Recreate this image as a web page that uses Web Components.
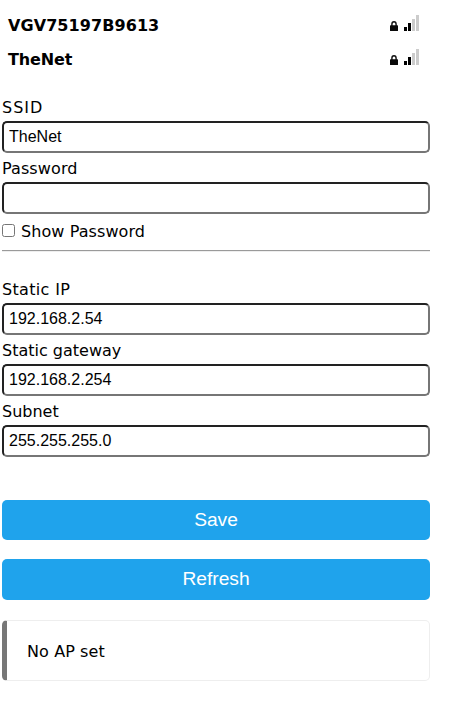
<!DOCTYPE html>
<html lang="en">
<head>
<meta charset="utf-8">
<title>WiFi configuration</title>
<style>
body { margin: 0; background: #fff; color: #000; font: 16px/20px Verdana, "DejaVu Sans", sans-serif; }
</style>
</head>
<body>
<wifi-page></wifi-page>
<script>
class BaseElement extends HTMLElement {
  render(html) {
    this.attachShadow({ mode: 'open' }).innerHTML = html;
  }
}

customElements.define('wifi-network', class extends BaseElement {
  connectedCallback() {
    this.render(`<style>
      :host { display: flex; justify-content: space-between; height: 34px; padding: 0 11px 0 6px; box-sizing: border-box; }
      .name { font-weight: bold; line-height: 36px; letter-spacing: var(--ls, 0); }
      svg { display: block; margin-top: 7px; }
    </style>
    <span class="name"><slot></slot></span>
    <svg width="29" height="16" viewBox="0 0 29 16">
      <path d="M1.9 11V9.2a2.1 2.4 0 0 1 4.2 0V11" fill="none" stroke="#111" stroke-width="1.4"/>
      <rect x="0" y="10.3" width="8" height="5.7" rx=".6" fill="#0a0a0a"/>
      <path d="M14 12h3v4h-3zM18 8h3v8h-3z" fill="#000"/>
      <path d="M22 4h3v12h-3zM26 0h3v16h-3z" fill="#ccc"/>
    </svg>`);
  }
});

customElements.define('text-field', class extends BaseElement {
  connectedCallback() {
    this.render(`<style>
      :host { display: block; }
      label { display: block; height: 29px; line-height: 31px; letter-spacing: var(--ls, 0); }
      input { display: block; box-sizing: border-box; width: 100%; height: 32px; margin: 0; padding: 0 5px; background: #fff; color: #000;
        border: 2px solid; border-color: #222 #767676 #767676 #222; border-radius: 5px; font: 16px "Liberation Sans", Arial, sans-serif; outline: none; }
    </style>
    <label for="i"><slot></slot></label><input id="i">`);
    const input = this.shadowRoot.querySelector('input');
    input.type = this.getAttribute('type') || 'text';
    input.value = this.getAttribute('value') || '';
  }
});

customElements.define('check-option', class extends BaseElement {
  connectedCallback() {
    this.render(`<style>
      :host { display: block; }
      label { display: flex; align-items: flex-start; gap: 6px; height: 34px; line-height: 36px; letter-spacing: var(--ls, 0); }
      input { width: 13px; height: 13px; margin: 10px 0 0; }
    </style>
    <label><input type="checkbox"><slot></slot></label>`);
  }
});

customElements.define('action-button', class extends BaseElement {
  connectedCallback() {
    this.render(`<style>
      :host { display: block; height: 40px; }
      button { display: block; width: 100%; height: 100%; padding: 0 0 var(--pb, 0); border: 0; border-radius: 5px; background: #1fa3ec; color: #fff;
        font: 19.2px/38px "Liberation Sans", Arial, sans-serif; }
    </style>
    <button><slot></slot></button>`);
  }
});

customElements.define('status-message', class extends BaseElement {
  connectedCallback() {
    this.render(`<style>
      :host { display: block; box-sizing: border-box; height: 61px; padding: 21px 20px 0; letter-spacing: .1px;
        border: 1px solid #eee; border-left: 5px solid #777; border-radius: 5px; }
    </style><slot></slot>`);
  }
});

customElements.define('wifi-page', class extends BaseElement {
  connectedCallback() {
    this.render(`<style>
      :host { display: block; width: 428px; padding: 8px 0 0 2px; }
      hr { margin: 2px 0 22px; border: 0; height: 1px; background: #9a9a9a; border-bottom: 1px solid #eee; }
      .networks { margin-bottom: 16px; }
      .save { margin-top: 43px; }
      .refresh { margin-top: 19px; height: 41px; --pb: 2px; }
      status-message { margin-top: 20px; }
    </style>
    <div class="networks">
      <wifi-network style="--ls: .08px">VGV75197B9613</wifi-network>
      <wifi-network style="--ls: -.15px">TheNet</wifi-network>
    </div>
    <text-field value="TheNet" style="--ls: 1px">SSID</text-field>
    <text-field type="password" style="--ls: .1px">Password</text-field>
    <check-option style="--ls: .08px">Show Password</check-option>
    <hr>
    <text-field value="192.168.2.54" style="--ls: .33px">Static IP</text-field>
    <text-field value="192.168.2.254">Static gateway</text-field>
    <text-field value="255.255.255.0">Subnet</text-field>
    <action-button class="save">Save</action-button>
    <action-button class="refresh">Refresh</action-button>
    <status-message>No AP set</status-message>`);
  }
});
</script>
</body>
</html>
